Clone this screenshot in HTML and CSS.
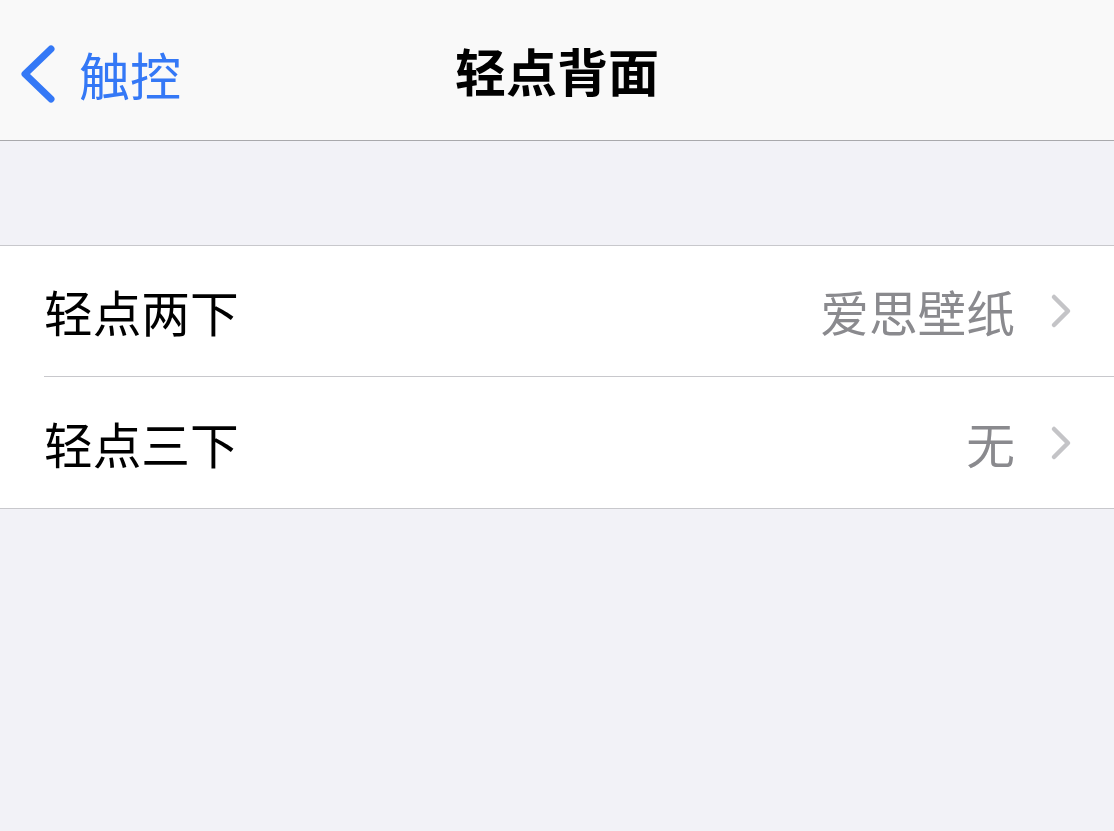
FILE: index.html
```html
<!DOCTYPE html>
<html lang="zh-CN">
<head>
  <meta charset="UTF-8">
  <meta name="viewport" content="width=device-width, initial-scale=1.0">
  <title>轻点背面</title>
  <link rel="stylesheet" href="styles.css">
</head>
<body>
  <header class="barra">
    <a class="volver" href="#">
      <svg class="volver-icono" width="40" height="58" viewBox="0 0 40 58">
        <path d="M33 4 L7 29 L33 54" fill="none" stroke="#3478f6" stroke-width="7" stroke-linecap="round" stroke-linejoin="round"/>
      </svg>
      <span>触控</span>
    </a>
    <h1 class="titulo">轻点背面</h1>
  </header>

  <div class="espacio"></div>

  <ul class="lista">
    <li class="fila">
      <span class="etiqueta">轻点两下</span>
      <span class="valor">爱思壁纸</span>
      <svg class="flecha" width="22" height="36" viewBox="0 0 22 36">
        <path d="M4 4 L18 18 L4 32" fill="none" stroke="#c4c4c7" stroke-width="4.5" stroke-linecap="round" stroke-linejoin="round"/>
      </svg>
    </li>
    <li class="fila">
      <span class="etiqueta">轻点三下</span>
      <span class="valor">无</span>
      <svg class="flecha" width="22" height="36" viewBox="0 0 22 36">
        <path d="M4 4 L18 18 L4 32" fill="none" stroke="#c4c4c7" stroke-width="4.5" stroke-linecap="round" stroke-linejoin="round"/>
      </svg>
    </li>
  </ul>
</body>
</html>
```

FILE: styles.css
```css
body {
  margin: 0;
  background: #f2f2f7;
  font-family: "Noto Sans CJK SC", "Noto Sans", sans-serif;
  height: 831px;
  overflow: hidden;
}
.barra {
  position: relative;
  height: 140px;
  background: #f9f9f9;
  border-bottom: 1px solid #a9a9ac;
  display: flex;
  align-items: center;
  justify-content: center;
}
.volver {
  position: absolute;
  left: 18px;
  top: 45px;
  display: flex;
  align-items: center;
  gap: 21px;
  color: #3478f6;
  text-decoration: none;
  font-size: 51px;
  line-height: 58px;
}
.titulo {
  margin: 0;
  font-size: 51px;
  font-weight: 700;
  line-height: 56px;
  color: #000;
}
.espacio {
  height: 104px;
}
.lista {
  list-style: none;
  margin: 0;
  padding: 0 0 0 44px;
  background: #fff;
  border-top: 1px solid #c8c8cc;
  border-bottom: 1px solid #c8c8cc;
}
.fila {
  display: flex;
  align-items: center;
  height: 130px;
  padding-right: 42px;
  font-size: 48.7px;
}
.fila + .fila {
  height: 131px;
  border-top: 1px solid #c8c8cc;
}
.etiqueta {
  flex: 1;
  color: #000;
}
.valor {
  color: #8a8a8e;
  margin-right: 35px;
}
```
